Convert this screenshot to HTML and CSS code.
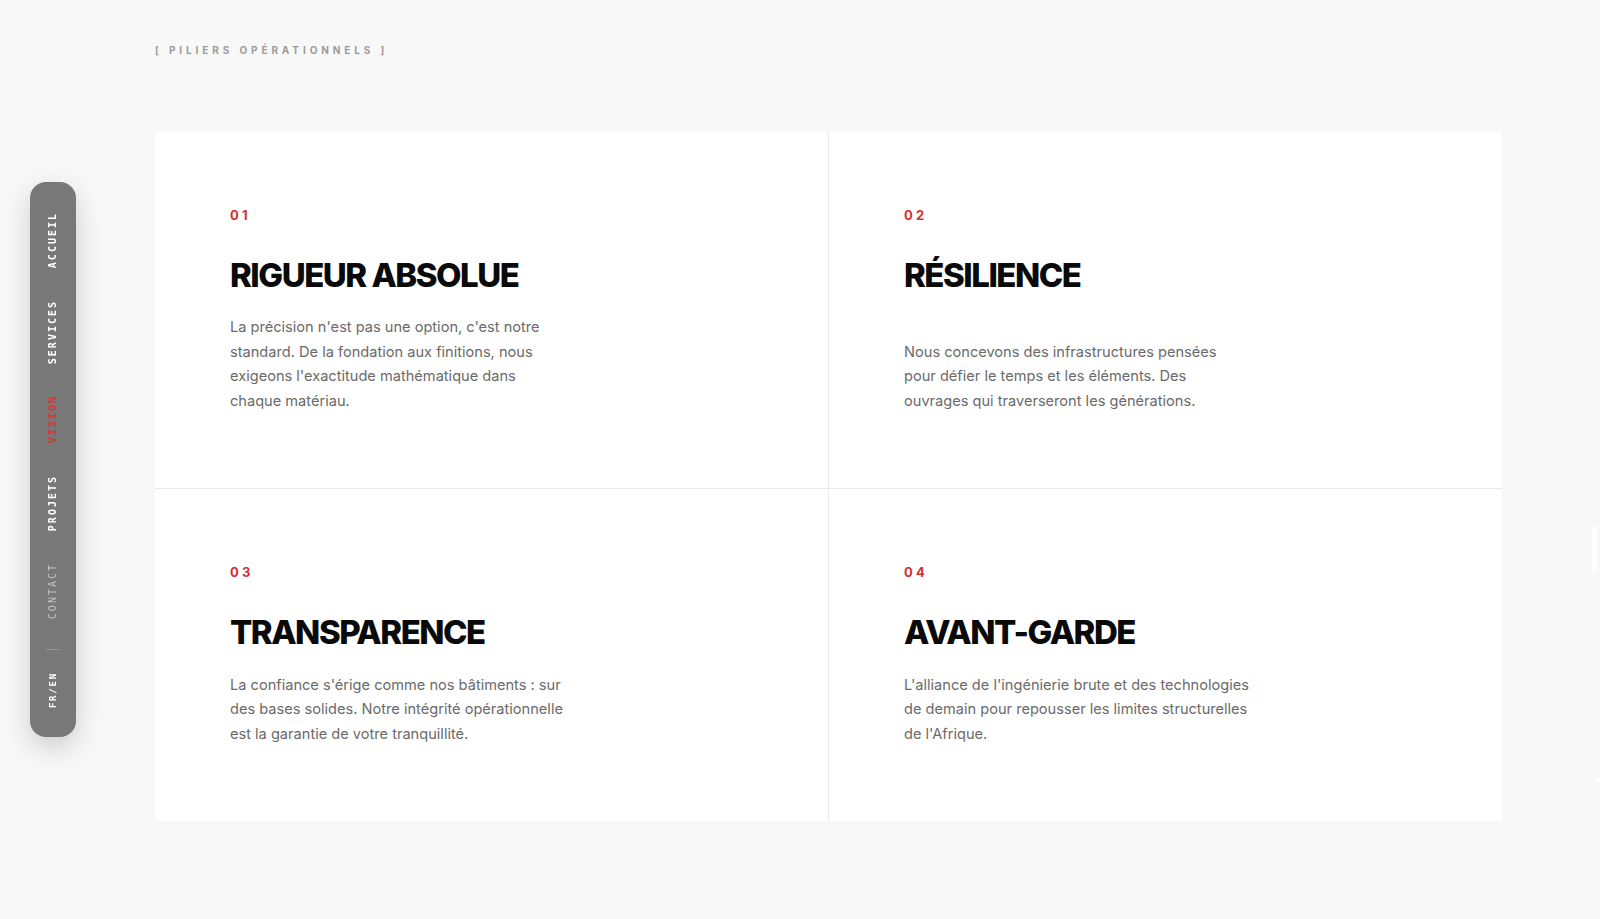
FILE: index.html
```html
<!DOCTYPE html>
<html lang="fr">
<head>
<meta charset="utf-8">
<title>Piliers opérationnels</title>
<link rel="stylesheet" href="styles.css">
</head>
<body>
<nav class="side-nav">
  <a class="nav-item">ACCUEIL</a>
  <a class="nav-item">SERVICES</a>
  <a class="nav-item active">VISION</a>
  <a class="nav-item">PROJETS</a>
  <a class="nav-item muted">CONTACT</a>
  <span class="nav-divider"></span>
  <a class="nav-item lang">FR/EN</a>
</nav>

<main class="page">
  <p class="eyebrow">[ PILIERS OPÉRATIONNELS ]</p>
  <section class="pillars">
    <article class="pillar">
      <span class="num">01</span>
      <h2 class="title">RIGUEUR ABSOLUE</h2>
      <p class="text">La précision n'est pas une option, c'est notre standard. De la fondation aux finitions, nous exigeons l'exactitude mathématique dans chaque matériau.</p>
    </article>
    <article class="pillar">
      <span class="num">02</span>
      <h2 class="title">RÉSILIENCE</h2>
      <p class="text">Nous concevons des infrastructures pensées pour défier le temps et les éléments. Des ouvrages qui traverseront les générations.</p>
    </article>
    <article class="pillar">
      <span class="num">03</span>
      <h2 class="title">TRANSPARENCE</h2>
      <p class="text text-wide">La confiance s'érige comme nos bâtiments : sur des bases solides. Notre intégrité opérationnelle est la garantie de votre tranquillité.</p>
    </article>
    <article class="pillar">
      <span class="num">04</span>
      <h2 class="title">AVANT-GARDE</h2>
      <p class="text text-wide">L'alliance de l'ingénierie brute et des technologies de demain pour repousser les limites structurelles de l'Afrique.</p>
    </article>
  </section>
</main>

<div class="scroll-track"></div>
<div class="cursor-ring"><span class="cursor-dot"></span></div>
</body>
</html>
```

FILE: styles.css
```css
* { box-sizing: border-box; }

html, body {
  margin: 0;
  padding: 0;
}

body {
  background: #f8f8f8;
  font-family: "Inter", "Liberation Sans", sans-serif;
  color: #0a0a0a;
  height: 919px;
  overflow: hidden;
}

.page {
  padding: 44px 0 0 155px;
  width: 1502px;
}

.eyebrow {
  margin: 0;
  font-size: 10px;
  line-height: 12px;
  font-weight: 700;
  letter-spacing: 0.39em;
  color: #9b9b9b;
}

.pillars {
  margin-top: 76px;
  display: grid;
  grid-template-columns: 673px 673px;
  gap: 1px;
  background: #e9e9e9;
}

.pillar {
  background: #ffffff;
  padding: 75px;
  display: flex;
  flex-direction: column;
  align-items: flex-start;
}

.num {
  font-size: 13px;
  line-height: 16px;
  font-weight: 700;
  letter-spacing: 0.25em;
  color: #d3302f;
}

.title {
  margin: 34px 0 0;
  font-size: 33px;
  line-height: 1.1;
  font-weight: 800;
  letter-spacing: -0.045em;
  color: #0a0a0a;
}

.text {
  margin: auto 0 0;
  padding-top: 22px;
  max-width: 334px;
  font-size: 14.6px;
  line-height: 24.5px;
  color: #6a6a6a;
}

.text-wide {
  max-width: 350px;
}

/* side navigation */
.side-nav {
  position: fixed;
  left: 30px;
  top: 182px;
  width: 46px;
  height: 555px;
  background: #787878;
  border-radius: 16px;
  box-shadow: 0 10px 28px rgba(0, 0, 0, 0.18);
  display: flex;
  flex-direction: column;
  align-items: center;
  padding: 30px 0 31px;
  gap: 31.5px;
}

.nav-item {
  writing-mode: vertical-rl;
  transform: rotate(180deg);
  font-family: "DejaVu Sans Mono", "Liberation Mono", monospace;
  font-size: 10px;
  font-weight: 700;
  letter-spacing: 2px;
  color: #ffffff;
  line-height: 12px;
}

.nav-item.active { color: #e0322f; }
.nav-item.muted { color: #c4c4c4; font-weight: 400; }
.nav-item.lang { font-size: 9px; letter-spacing: 1.8px; }

.nav-divider {
  flex: none;
  width: 14px;
  height: 1px;
  background: #959595;
  margin: -1.5px 0 -9px;
}

/* faint decorations on the right edge */
.scroll-track {
  position: fixed;
  left: 1592px;
  top: 525px;
  width: 5px;
  height: 47px;
  border-radius: 3px;
  background: #fdfdfd;
}

.cursor-ring {
  position: fixed;
  left: 1581px;
  top: 762px;
  width: 36px;
  height: 36px;
  border-radius: 50%;
  border: 1px solid #ffffff;
  display: flex;
  align-items: center;
  justify-content: center;
}

.cursor-dot {
  width: 6px;
  height: 6px;
  border-radius: 50%;
  background: #ffffff;
}
```
